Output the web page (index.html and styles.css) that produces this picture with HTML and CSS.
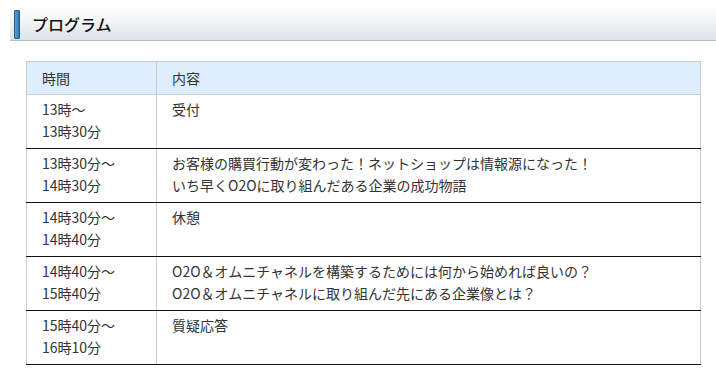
FILE: index.html
```html
<!DOCTYPE html>
<html lang="ja">
<head>
    <meta charset="UTF-8">
    <meta name="viewport" content="width=device-width, initial-scale=1.0">
    <title>プログラム</title>
    <link rel="stylesheet" href="styles.css">
</head>
<body>
    <h2 class="section-title"><span class="title-mark"></span>プログラム</h2>

    <table class="program-table">
        <thead>
            <tr>
                <th class="col-time">時間</th>
                <th>内容</th>
            </tr>
        </thead>
        <tbody>
            <tr>
                <td>13時～<br>13時30分</td>
                <td>受付</td>
            </tr>
            <tr>
                <td>13時30分～<br>14時30分</td>
                <td>お客様の購買行動が変わった！ネットショップは情報源になった！<br>いち早くO2Oに取り組んだある企業の成功物語</td>
            </tr>
            <tr>
                <td>14時30分～<br>14時40分</td>
                <td>休憩</td>
            </tr>
            <tr>
                <td>14時40分～<br>15時40分</td>
                <td>O2O＆オムニチャネルを構築するためには何から始めれば良いの？<br>O2O＆オムニチャネルに取り組んだ先にある企業像とは？</td>
            </tr>
            <tr>
                <td>15時40分～<br>16時10分</td>
                <td>質疑応答</td>
            </tr>
        </tbody>
    </table>
</body>
</html>
```

FILE: styles.css
```css
body {
    font-family: "Noto Sans CJK JP", "Noto Sans", sans-serif;
    color: #333;
    background-color: #fff;
    margin: 0;
    padding: 0;
}
.section-title {
    display: flex;
    align-items: center;
    height: 32px;
    margin: 8px 0 0 10px;
    padding: 0;
    font-size: 16px;
    font-weight: 500;
    color: #111;
    background: linear-gradient(to bottom, #fffdfe 0%, #f1f3f6 45%, #dbe2e8 100%);
    border-bottom: 1px solid #a7c1cc;
}
.title-mark {
    display: block;
    width: 4px;
    height: 27px;
    margin: 0 12px 0 4px;
    background: linear-gradient(to right, #5d9fd0, #2f78b4);
    border: 1px solid #1f5d8e;
    border-radius: 1px;
}
.program-table {
    border-collapse: collapse;
    width: 675px;
    margin: 20px 0 0 26px;
    font-size: 14px;
    line-height: 22px;
}
.program-table th,
.program-table td {
    text-align: left;
    vertical-align: top;
    padding: 3px 15px 6px;
    border-left: 1px solid #ccc;
    border-right: 1px solid #ccc;
}
.program-table th {
    font-weight: normal;
    background-color: #deeeff;
    padding: 5px 15px;
    border-top: 1px solid #ccc;
    border-bottom: 1px solid #ccc;
}
.program-table .col-time {
    width: 99px;
}
.program-table td {
    border-bottom: 1px solid #111;
}
```
